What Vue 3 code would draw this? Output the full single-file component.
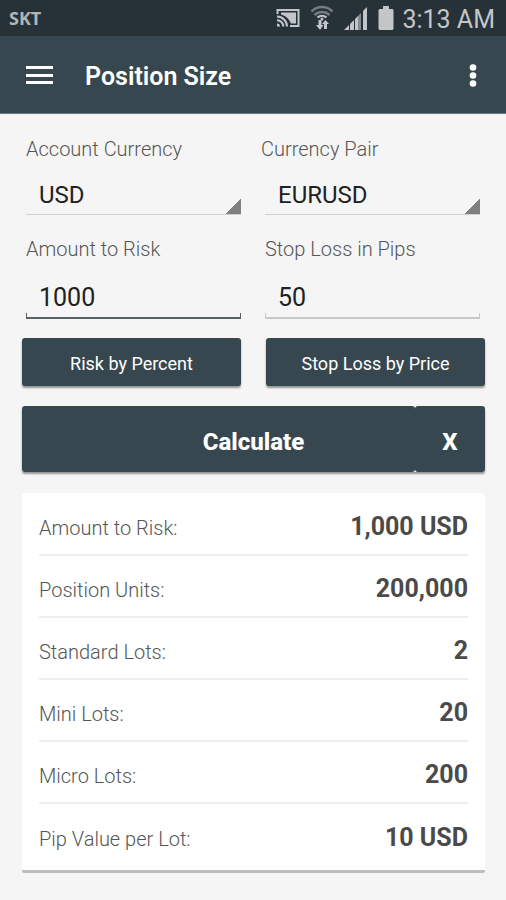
<template>
  <div class="screen">
    <div class="status-bar">
      <span class="carrier">SKT</span>
      <div class="status-icons">
        <svg class="cast" width="24" height="20" viewBox="0 0 24 20" fill="none" stroke="currentColor">
          <path d="M1.5 6V2h21v16H14" stroke-width="2" />
          <path d="M5 4.500h15v11h-5C13 10.500 9.500 7.500 5 6.500z" fill="currentColor" stroke="none" />
          <path d="M1 8.500c5.500 0 10 4.500 10 10M1 12.200c3.500 0 6.300 2.800 6.300 6.300" stroke-width="2" />
          <path d="M1 15.500c2 0 3 1 3 3H1z" fill="currentColor" stroke="none" />
        </svg>
        <svg class="wifi" width="24" height="26" viewBox="0 0 24 26" fill="none" stroke="currentColor">
          <path d="M1.500 6.500c6-6 15-6 21 0" stroke-width="2.500" opacity="0.5" />
          <path d="M4.500 10c4-4 11-4 15 0" stroke-width="2.500" opacity="0.5" />
          <path d="M7.500 12.500c2.500-2.500 6.500-2.500 9 0" stroke-width="2" />
          <circle cx="12" cy="14" r="1.500" fill="currentColor" stroke="none" />
          <path d="M8.500 15v5H6l4 5 3.500-5h-2v-5z" fill="currentColor" stroke="none" />
          <path d="M14 24v-5h-2l3.500-4 3.500 4h-2v5z" fill="currentColor" stroke="none" />
        </svg>
        <svg class="signal" width="24" height="24" viewBox="0 0 24 24" fill="currentColor">
          <path d="M0 24l5-5v5zM6 18l4-4v10H6zM11 13l3-3v14h-3z" />
          <path d="M14 10l3-3v17h-3z" opacity="0.6" />
          <path d="M19 5l4-4v23h-4z" />
        </svg>
        <svg class="battery" width="16" height="24" viewBox="0 0 16 24" fill="currentColor">
          <path d="M5 0h6v3h3.500l1 1v19l-1 1h-13l-1-1V4l1-1H5z" />
        </svg>
      </div>
      <span class="clock">3:13 AM</span>
    </div>

    <header class="app-bar">
      <button class="icon-button" type="button" aria-label="Menu">
        <svg width="27" height="20" viewBox="0 0 27 20" fill="currentColor">
          <path d="M0 0h27v3H0zM0 8h27v3H0zM0 15h27v3H0z" />
        </svg>
      </button>
      <h1>Position Size</h1>
      <button class="icon-button" type="button" aria-label="More options">
        <svg width="8" height="24" viewBox="0 0 8 24" fill="currentColor">
          <circle cx="4" cy="3.500" r="3.300" />
          <circle cx="4" cy="11.500" r="3.300" />
          <circle cx="4" cy="19.500" r="3.300" />
        </svg>
      </button>
    </header>

    <form class="form" @submit.prevent="calculate">
      <div class="fields fields-close">
        <label for="currency">Account Currency</label>
        <label for="pair">Currency Pair</label>
      </div>
      <div class="fields">
        <select id="currency" v-model="currency">
          <option v-for="c in currencies" :key="c">{{ c }}</option>
        </select>
        <select id="pair" v-model="pair">
          <option v-for="p in pairs" :key="p">{{ p }}</option>
        </select>
      </div>
      <div class="fields fields-inputs">
        <label for="amount">Amount to Risk</label>
        <label for="stop">Stop Loss in Pips</label>
        <input id="amount" v-model="amount" class="active" type="text" inputmode="decimal" />
        <input id="stop" v-model="stopLoss" type="text" inputmode="decimal" />
      </div>
      <div class="modes">
        <button type="button">Risk by Percent</button>
        <button type="button">Stop Loss by Price</button>
      </div>
      <div class="actions">
        <button class="calculate" type="submit">Calculate</button>
        <button class="clear" type="button" aria-label="Clear" @click="clear">X</button>
      </div>
    </form>

    <dl class="results">
      <div v-for="row in results" :key="row.label" class="result">
        <dt>{{ row.label }}:</dt>
        <dd>{{ row.value }}</dd>
      </div>
    </dl>
  </div>
</template>

<script setup>
import { ref } from 'vue'

const currencies = ['USD', 'EUR', 'GBP', 'JPY']
const pairs = ['EURUSD', 'GBPUSD', 'AUDUSD', 'NZDUSD']

const currency = ref('USD')
const pair = ref('EURUSD')
const amount = ref('1000')
const stopLoss = ref('50')
const results = ref([])

const PIP_VALUE = 10 // per standard lot

const format = (n) => n.toLocaleString('en-US')

const calculate = () => {
  const risk = Number(amount.value) || 0
  const pips = Number(stopLoss.value) || 0
  const lots = pips > 0 ? risk / (pips * PIP_VALUE) : 0

  results.value = [
    { label: 'Amount to Risk', value: `${format(risk)} ${currency.value}` },
    { label: 'Position Units', value: format(lots * 100000) },
    { label: 'Standard Lots', value: format(lots) },
    { label: 'Mini Lots', value: format(lots * 10) },
    { label: 'Micro Lots', value: format(lots * 100) },
    { label: 'Pip Value per Lot', value: `${PIP_VALUE} ${currency.value}` }
  ]
}

const clear = () => {
  amount.value = ''
  stopLoss.value = ''
  calculate()
}

calculate()
</script>

<style>
body {
  background-color: #f5f5f5;
}
</style>

<style scoped>
.screen {
  min-height: 100vh;
  box-sizing: border-box;
  padding-bottom: 24px;
  background-color: #f5f5f5;
  font-family: Roboto, sans-serif;
}

button,
input,
select {
  box-sizing: border-box;
  margin: 0;
  border: none;
  border-radius: 0;
  font-family: inherit;
}

button {
  cursor: pointer;
}

.status-bar {
  display: flex;
  align-items: center;
  height: 36px;
  padding: 0 11px 0 9px;
  background-color: #263238;
  color: #c3c6c8;
}

.carrier {
  flex: 1;
  font-family: 'Noto Sans', sans-serif;
  font-size: 18px;
  font-weight: 700;
  color: #b0b5b8;
}

.status-icons {
  display: flex;
  align-items: center;
  gap: 10px;
  margin-right: 8px;
}

.clock {
  padding-top: 4px;
  font-size: 25px;
  line-height: 32px;
}

.app-bar {
  display: flex;
  align-items: center;
  height: 78px;
  box-sizing: border-box;
  padding: 2px 17px 0 14px;
  background-color: #37474f;
  border-bottom: 1px solid #6b767b;
  color: #fff;
}

.app-bar h1 {
  flex: 1;
  margin: 0 0 0 20px;
  padding-top: 2px;
  font-size: 25px;
  font-weight: 600;
  line-height: 32px;
}

.icon-button {
  display: flex;
  padding: 12px;
  background: none;
  color: inherit;
}

.form {
  padding: 23px 21px 0 22px;
}

.fields {
  display: grid;
  grid-template-columns: 1fr 1fr;
  gap: 15px 24px;
  padding: 0 5px 0 4px;
}

.fields-close {
  column-gap: 16px;
  margin-bottom: 14px;
}

.fields-inputs {
  margin-top: 22px;
  row-gap: 16px;
}

label {
  font-size: 20px;
  font-weight: 300;
  line-height: 24px;
  color: #555;
}

select,
input {
  width: 100%;
  padding: 0 13px;
  outline: none;
  color: #212121;
}

select {
  height: 40px;
  appearance: none;
  border-bottom: 1px solid #d0d0d0;
  background: linear-gradient(135deg, transparent 50%, #808080 50%) right bottom / 17px 17px no-repeat border-box;
  font-size: 24px;
}

/* bracket-shaped underline: short ticks at both ends */
input {
  --line: #c8c8c8;
  height: 42px;
  border-bottom: 2px solid var(--line);
  background:
    linear-gradient(var(--line), var(--line)) left bottom / 1px 4px no-repeat,
    linear-gradient(var(--line), var(--line)) right bottom / 1px 4px no-repeat;
  font-size: 25px;
}

input.active {
  --line: #5a6164;
}

.modes {
  display: grid;
  grid-template-columns: 1fr 1fr;
  gap: 25px;
  margin-top: 19px;
}

.modes button,
.actions button {
  border-radius: 3px;
  background-color: #37474f;
  color: #fff;
}

.modes button {
  height: 48px;
  padding: 2px 0 0;
  box-shadow: 0 2px 2px rgba(0, 0, 0, 0.4);
  font-size: 18px;
}

.actions {
  display: flex;
  margin-top: 20px;
  border-radius: 3px;
  box-shadow: 0 2px 2px rgba(0, 0, 0, 0.4);
}

.actions button {
  height: 66px;
  font-size: 24px;
  font-weight: 800;
}

.actions .calculate {
  flex: 1;
  padding: 6px 0 0 70px;
}

.actions .clear {
  width: 70px;
  padding: 6px 0 0;
}

.results {
  margin: 21px 21px 0 22px;
  padding: 1px 17px 4px;
  background-color: #fff;
  border-bottom: 3px solid #bdbdbd;
  border-radius: 4px 4px 2px 2px;
}

.result {
  display: flex;
  align-items: center;
  justify-content: space-between;
  height: 62px;
  box-sizing: border-box;
  padding-top: 6px;
  border-bottom: 2px solid #eee;
}

.result:last-child {
  border-bottom: none;
}

dt {
  padding-top: 2px;
  font-size: 20px;
  font-weight: 300;
  line-height: 28px;
  color: #555;
}

dd {
  margin: 0;
  font-size: 25px;
  font-weight: 700;
  line-height: 28px;
  color: #4a4a4a;
}
</style>
